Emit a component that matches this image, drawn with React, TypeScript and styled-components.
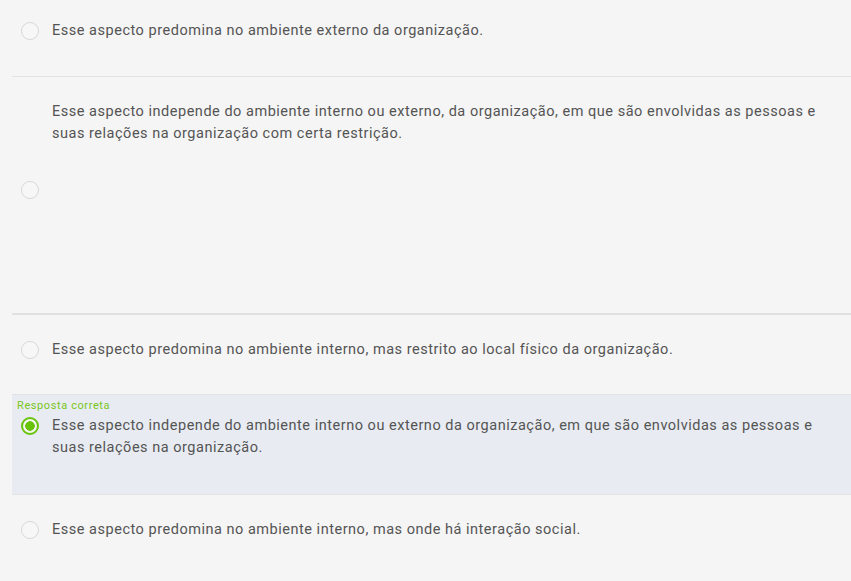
import React from 'react';
import styled, { createGlobalStyle } from 'styled-components';

const GlobalStyle = createGlobalStyle`
  html, body {
    margin: 0;
    padding: 0;
    background: #f5f5f5;
  }
  body {
    font-family: Roboto, "Liberation Sans", sans-serif;
  }
`;

interface Option {
  text: string;
  correct?: boolean;
  figure?: boolean;
}

const options: Option[] = [
  { text: 'Esse aspecto predomina no ambiente externo da organização.' },
  {
    text: 'Esse aspecto independe do ambiente interno ou externo, da organização, em que são envolvidas as pessoas e suas relações na organização com certa restrição.',
    figure: true,
  },
  { text: 'Esse aspecto predomina no ambiente interno, mas restrito ao local físico da organização.' },
  {
    text: 'Esse aspecto independe do ambiente interno ou externo da organização, em que são envolvidas as pessoas e suas relações na organização.',
    correct: true,
  },
  { text: 'Esse aspecto predomina no ambiente interno, mas onde há interação social.' },
];

const App: React.FC = () => (
  <>
    <GlobalStyle />
    <List>
      {options.map((opt, i) => (
        <Item key={i} $correct={!!opt.correct} $last={i === options.length - 1}>
          {opt.correct && <CorrectTag>Resposta correta</CorrectTag>}
          {opt.figure ? (
            <>
              <FigureText>{opt.text}</FigureText>
              <Row>
                <Radio $checked={false} />
              </Row>
              <EmptyFigure />
            </>
          ) : (
            <Row>
              <Radio $checked={!!opt.correct} />
              <Label>{opt.text}</Label>
            </Row>
          )}
        </Item>
      ))}
    </List>
  </>
);

const List = styled.div`
  margin-left: 12px;
  display: flex;
  flex-direction: column;
`;

const Item = styled.div<{ $correct: boolean; $last: boolean }>`
  padding: ${({ $correct }) => ($correct ? '4px 0 35px 9px' : '24px 0 33px 9px')};
  background: ${({ $correct }) => ($correct ? '#e8ecf2' : 'transparent')};
  border-bottom: ${({ $last }) => ($last ? 'none' : '1px solid #e3e3e3')};

  &:first-child {
    padding-top: 20px;
    padding-bottom: 34px;
  }

  &:nth-child(2) {
    border-bottom-width: 2px;
    border-bottom-color: #e1e1e1;
  }
`;

const CorrectTag = styled.div`
  font-size: 11px;
  line-height: 14px;
  letter-spacing: 0.6px;
  color: #7ac61c;
  margin-left: -4px;
  margin-bottom: 2px;
`;

const Row = styled.div`
  display: flex;
  align-items: flex-start;
  gap: 13px;
`;

const Radio = styled.span<{ $checked: boolean }>`
  flex: none;
  box-sizing: border-box;
  width: 18px;
  height: 18px;
  margin-top: 2px;
  border-radius: 50%;
  border: ${({ $checked }) => ($checked ? '2.5px solid #68c40b' : '1.5px solid #d8d8d8')};
  background: ${({ $checked }) =>
    $checked ? 'radial-gradient(circle, #68c40b 0 4.5px, #f2f5f0 5px)' : '#f7f7f7'};
`;

const Label = styled.div`
  font-size: 14.5px;
  line-height: 22px;
  color: #545454;
  letter-spacing: 0.52px;
  padding-right: 16px;
`;

const FigureText = styled(Label)`
  padding-left: 31px;
  margin-top: 0;
  margin-bottom: 34px;
`;

const EmptyFigure = styled.div`
  height: 81px;
`;

export default App;
